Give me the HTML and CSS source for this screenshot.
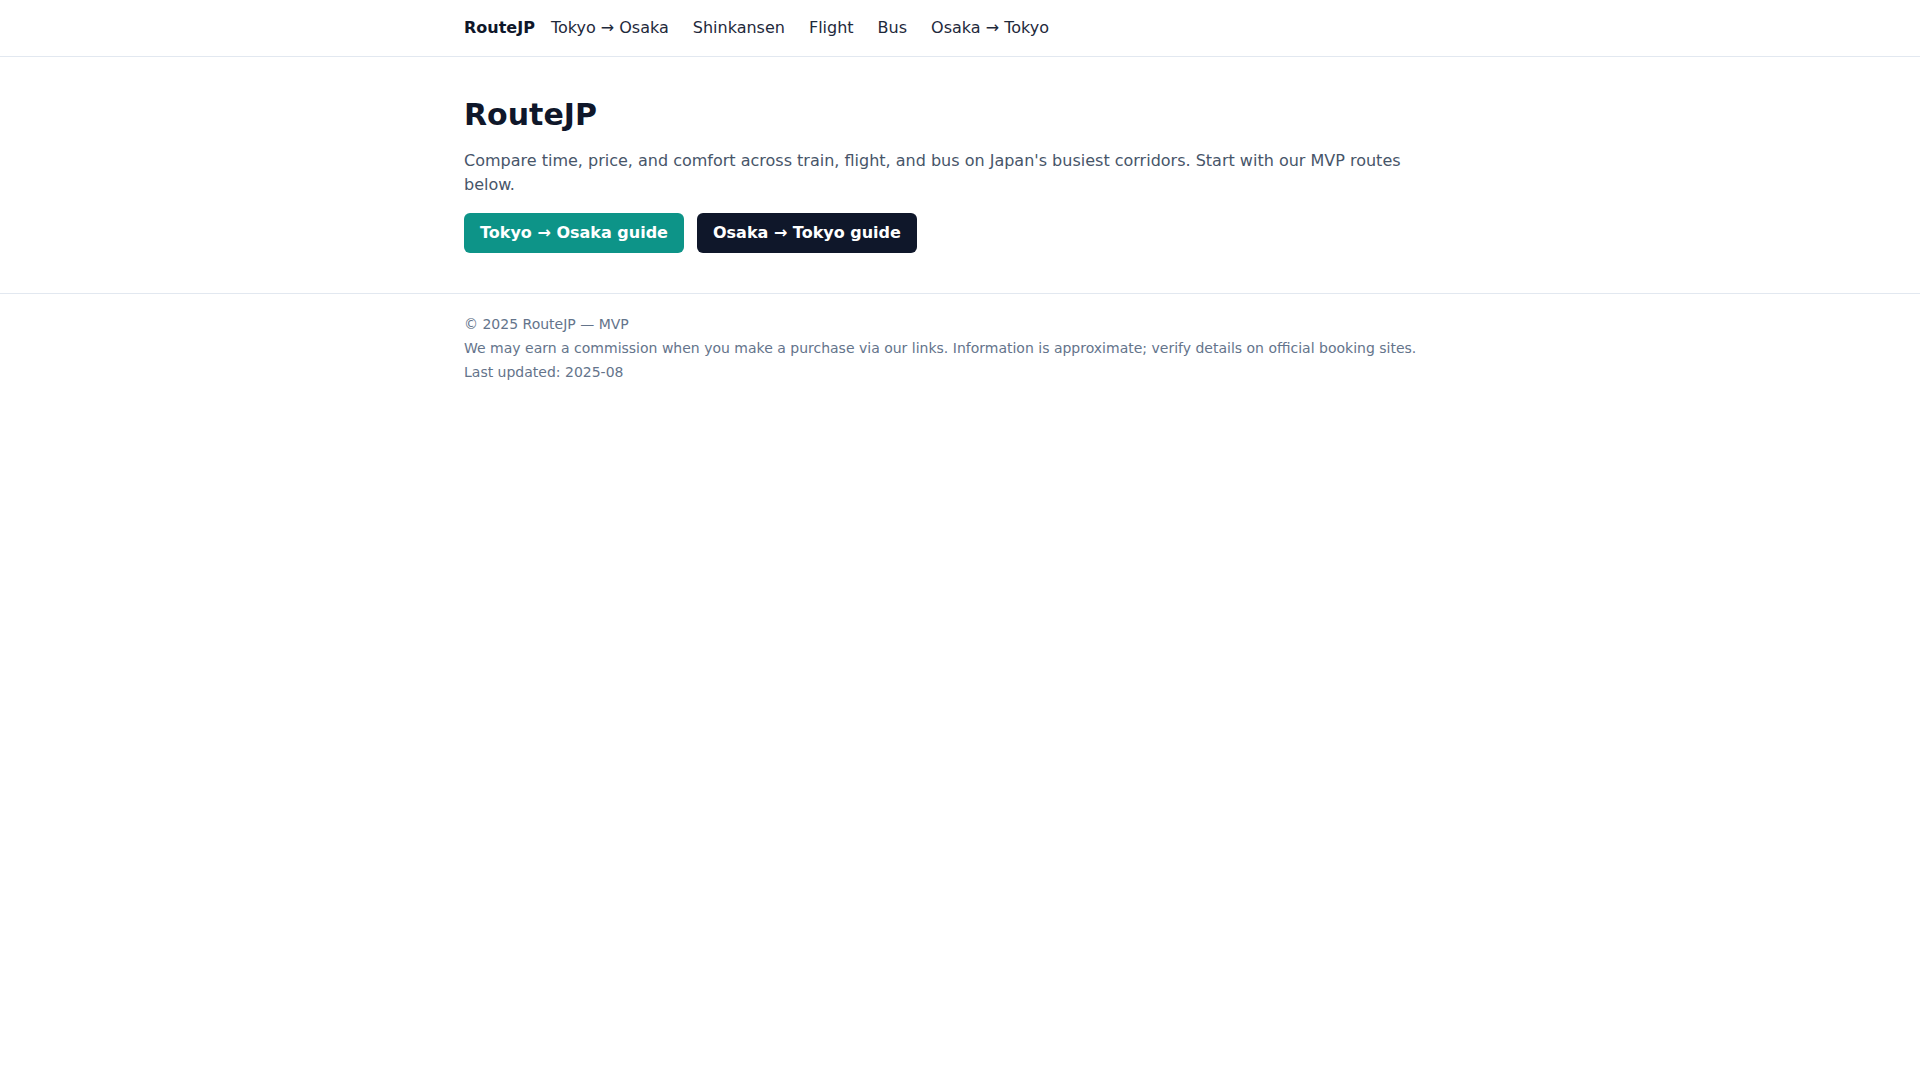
FILE: index.html
```html
<!DOCTYPE html>
<html lang="en">
<head>
<meta charset="utf-8">
<title>RouteJP</title>
<link rel="stylesheet" href="styles.css">
</head>
<body>
<header class="site-header">
  <div class="container header-inner">
    <a class="brand" href="#">RouteJP</a>
    <nav class="nav">
      <a href="#">Tokyo → Osaka</a>
      <a href="#">Shinkansen</a>
      <a href="#">Flight</a>
      <a href="#">Bus</a>
      <a href="#">Osaka → Tokyo</a>
    </nav>
  </div>
</header>
<main class="container main">
  <h1 class="title">RouteJP</h1>
  <p class="lead">Compare time, price, and comfort across train, flight, and bus on Japan's busiest corridors. Start with our MVP routes below.</p>
  <div class="actions">
    <a class="btn btn-teal" href="#">Tokyo → Osaka guide</a>
    <a class="btn btn-dark" href="#">Osaka → Tokyo guide</a>
  </div>
</main>
<footer class="site-footer">
  <div class="container footer-inner">
    <p>© 2025 RouteJP — MVP</p>
    <p>We may earn a commission when you make a purchase via our links. Information is approximate; verify details on official booking sites.</p>
    <p>Last updated: 2025-08</p>
  </div>
</footer>
</body>
</html>
```

FILE: styles.css
```css
* { box-sizing: border-box; }
html, body { margin: 0; padding: 0; }
body {
  font-family: "DejaVu Sans", sans-serif;
  color: #0f172a;
  background: #ffffff;
  font-size: 16px;
  line-height: 24px;
}
a { text-decoration: none; color: inherit; }
p { margin: 0; }
.container {
  max-width: 1024px;
  margin: 0 auto;
  padding: 0 16px;
}
.site-header {
  border-bottom: 1px solid #e2e8f0;
}
.header-inner {
  display: flex;
  align-items: center;
  gap: 16px;
  padding-top: 16px;
  padding-bottom: 16px;
}
.brand { font-weight: 700; color: #0f172a; }
.nav {
  display: flex;
  gap: 24px;
  color: #1e293b;
}
.main {
  padding-top: 40px;
  padding-bottom: 40px;
}
.title {
  margin: 0;
  font-size: 30px;
  line-height: 36px;
  font-weight: 700;
  color: #0f172a;
}
.lead {
  margin-top: 16px;
  color: #475569;
}
.actions {
  display: flex;
  gap: 13px;
  margin-top: 16px;
}
.btn {
  display: inline-block;
  padding: 8px 16px;
  border-radius: 6px;
  color: #ffffff;
  font-weight: 700;
}
.btn-teal { background: #0d9488; }
.btn-dark { background: #0f172a; }
.site-footer {
  border-top: 1px solid #e2e8f0;
}
.footer-inner {
  padding-top: 20px;
  padding-bottom: 24px;
  font-size: 14px;
  line-height: 20px;
  color: #64748b;
  display: flex;
  flex-direction: column;
  gap: 4px;
}
```
